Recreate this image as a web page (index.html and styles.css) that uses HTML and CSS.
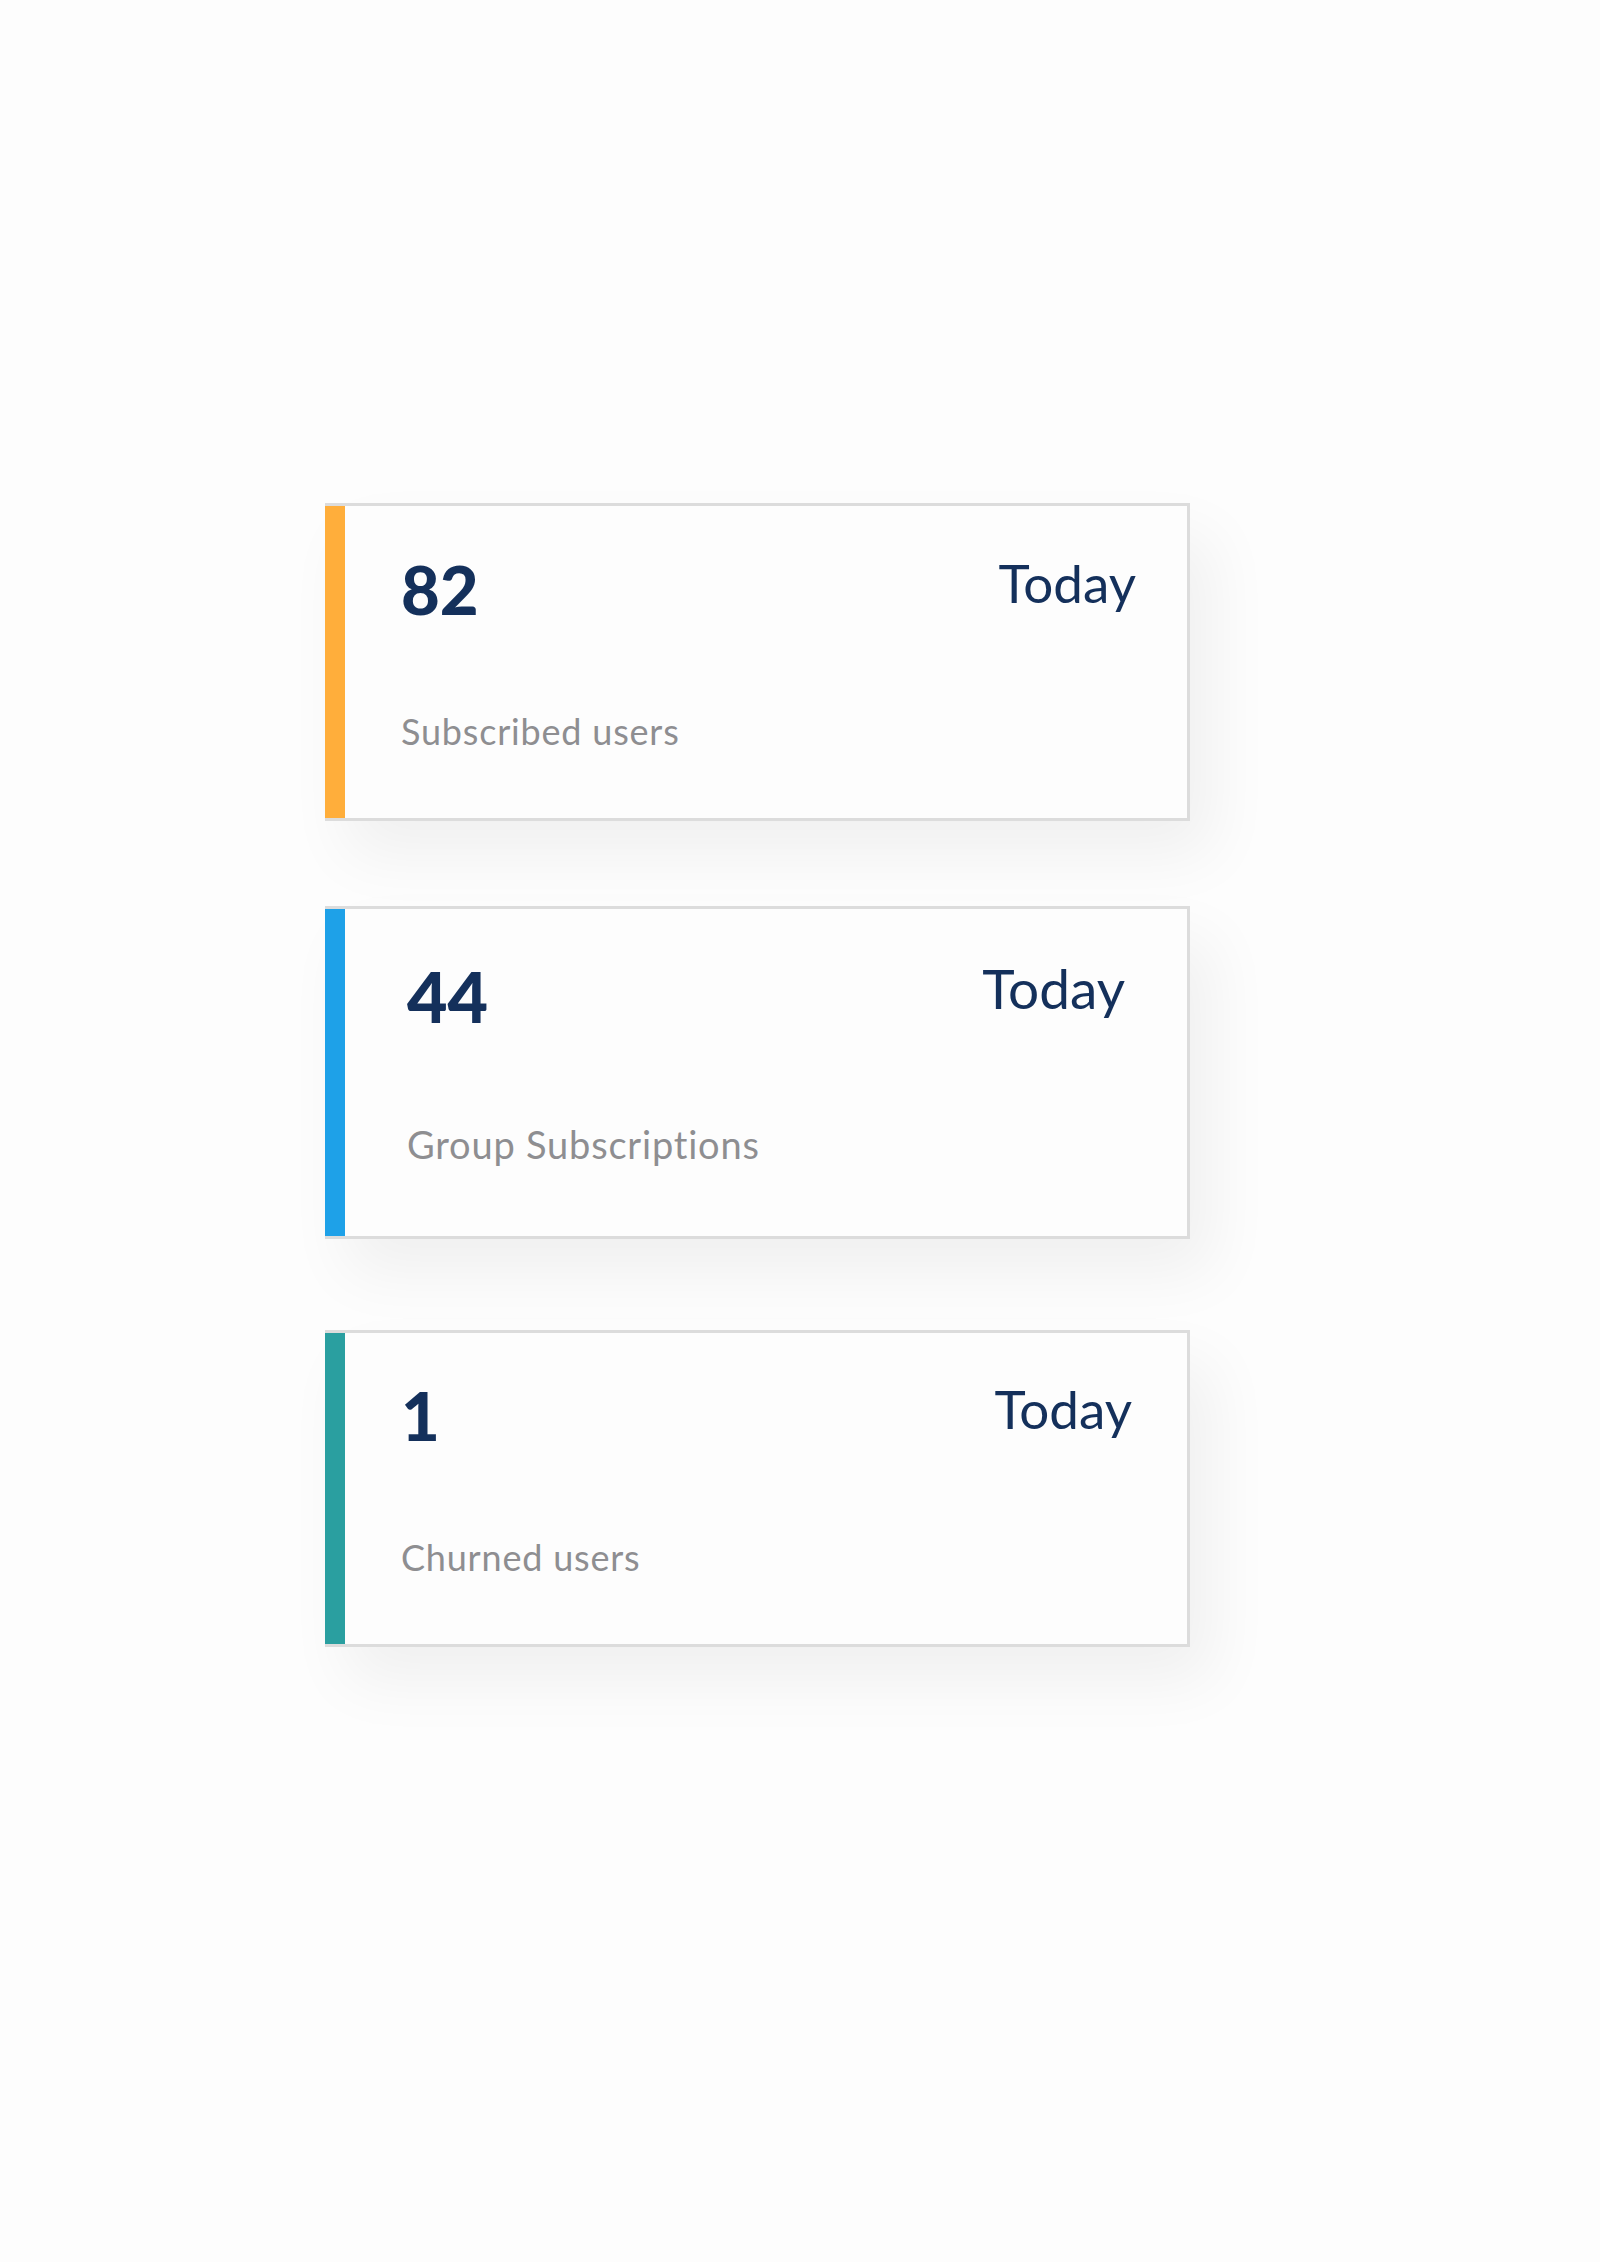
FILE: index.html
```html
<html>
<head>
    <link rel="stylesheet" href="styles.css">
</head>
<body>
    <div id="stats">
        <div class="card card-first">
            <div class="bar bar-orange"></div>
            <div class="card-body">
                <div class="card-head">
                    <span class="value">82</span>
                    <span class="period">Today</span>
                </div>
                <div class="label">Subscribed users</div>
            </div>
        </div>
        <div class="card card-second">
            <div class="bar bar-blue"></div>
            <div class="card-body">
                <div class="card-head">
                    <span class="value">44</span>
                    <span class="period">Today</span>
                </div>
                <div class="label">Group Subscriptions</div>
            </div>
        </div>
        <div class="card card-third">
            <div class="bar bar-teal"></div>
            <div class="card-body">
                <div class="card-head">
                    <span class="value">1</span>
                    <span class="period">Today</span>
                </div>
                <div class="label">Churned users</div>
            </div>
        </div>
    </div>
</body>
</html>
```

FILE: styles.css
```css
html, body {
    margin: 0px;
    background: #fdfdfd;
    font-family: "Lato", "Liberation Sans", sans-serif;
}
#stats {
    padding: 503px 0px 0px 325px;
    display: flex;
    flex-direction: column;
    align-items: flex-start;
}
.card {
    box-sizing: border-box;
    width: 865px;
    display: flex;
    background: #fdfdfd;
    border: 3px solid #dcdcdc;
    border-left: 0px;
    box-shadow: 22px 34px 60px rgba(0, 0, 0, 0.055);
}
.bar {
    width: 20px;
    flex-shrink: 0;
}
.bar-orange {
    background: #ffae3b;
}
.bar-blue {
    background: #1ea1e8;
}
.bar-teal {
    background: #2a9fa0;
}
.card-body {
    flex: 1;
    display: flex;
    flex-direction: column;
    justify-content: space-between;
}
.card-first {
    height: 318px;
}
.card-first .card-body {
    padding: 50px 51px 69px 56px;
}
.card-second {
    height: 333px;
    margin-top: 85px;
}
.card-second .card-body {
    padding: 52px 62px 73px 62px;
}
.card-third {
    height: 317px;
    margin-top: 91px;
}
.card-third .card-body {
    padding: 49px 55px 69px 56px;
}
.card-head {
    display: flex;
    justify-content: space-between;
    align-items: flex-start;
}
.value {
    font-size: 67px;
    font-weight: 900;
    line-height: 1;
    color: #14305b;
}
.period {
    font-size: 53px;
    line-height: 1;
    color: #14305b;
}
.label {
    font-size: 36px;
    letter-spacing: 0.8px;
    line-height: 1;
    color: #8e8e91;
}
.card-second .value {
    font-size: 70px;
}
.card-second .period {
    font-size: 55px;
}
.card-second .label {
    font-size: 38px;
}
```
